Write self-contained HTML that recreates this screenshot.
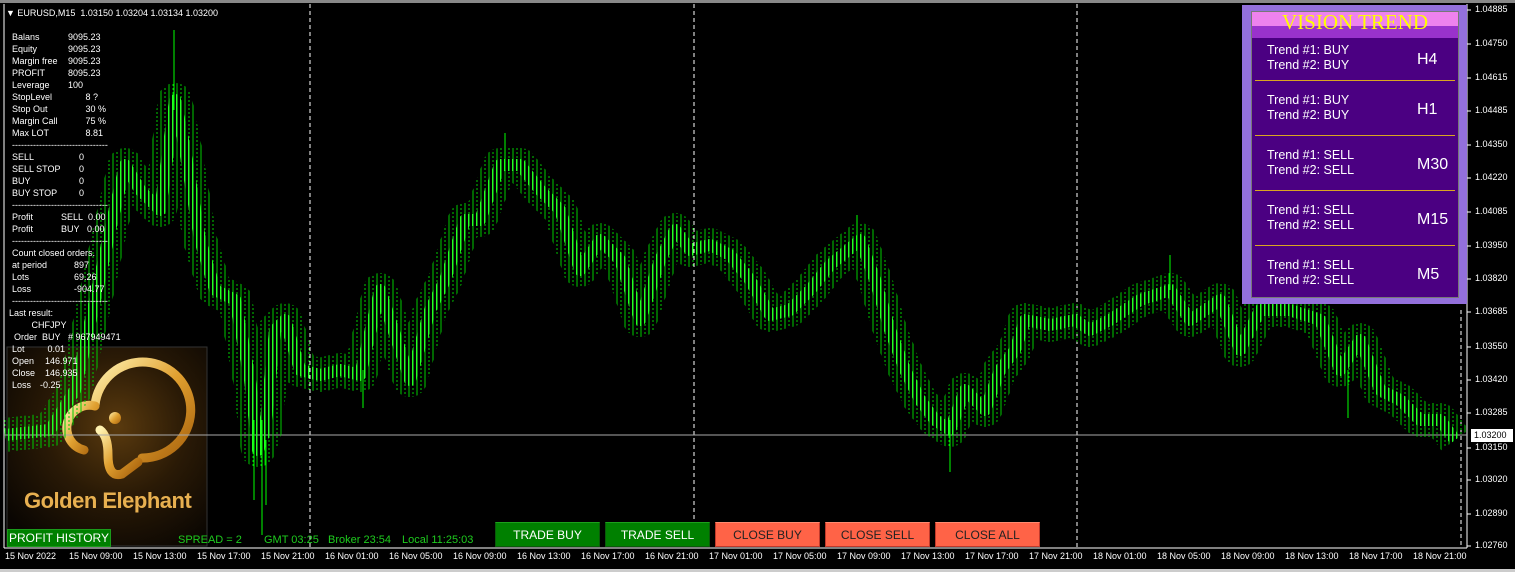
<!DOCTYPE html>
<html><head><meta charset="utf-8">
<style>
body{margin:0;width:1515px;height:572px;background:#000;overflow:hidden;position:relative;font-family:"Liberation Sans",sans-serif;}
.a{position:absolute;white-space:nowrap}
.info{color:#fff;font-size:9px;line-height:12px}
.px{position:absolute;color:#fff;font-size:9px;left:1475px}
.tm{position:absolute;color:#fff;font-size:9px;top:551px;white-space:nowrap}
.btn{position:absolute;top:522px;height:25px;width:105px;font-size:12px;text-align:center;line-height:24px;box-sizing:border-box}
.g{background:#008000;color:#fff;border:1px solid #0a5a0a;border-top-color:#1ca01c}
.r{background:#ff6347;color:#222;border:1px solid #c0392b;border-top-color:#ff8a70}
.tr{color:#fff;font-size:12.5px;line-height:15px;left:1267px}
.tf{color:#fff;font-size:16px;left:1417px}
.sep{position:absolute;left:1255px;width:200px;height:1px;background:#daa520}
.gt{color:#1ecc1e;font-size:11px;top:534px}
</style></head><body>
<div class="a" style="left:0;top:0;width:1515px;height:3px;background:#888"></div>
<div class="a" style="left:0;top:569px;width:1515px;height:3px;background:#ccc"></div>
<svg class="a" style="left:0;top:0" width="1515" height="572">
<defs>
<radialGradient id="lg" cx="0.55" cy="0.4" r="0.7"><stop offset="0" stop-color="#5a3a0e"/><stop offset="0.5" stop-color="#2a1a06"/><stop offset="1" stop-color="#0a0602"/></radialGradient>
<linearGradient id="gd" x1="0" y1="0" x2="1" y2="1"><stop offset="0" stop-color="#fff2b0"/><stop offset="0.5" stop-color="#e0a030"/><stop offset="1" stop-color="#a8620c"/></linearGradient>
<pattern id="pb" patternUnits="userSpaceOnUse" width="4" height="4"><rect x="0" y="0" width="1.5" height="4" fill="#22ff22"/></pattern>
<pattern id="pw" patternUnits="userSpaceOnUse" width="8" height="4"><rect x="0.5" y="0" width="1" height="4" fill="#00cc00"/><rect x="4.5" y="0" width="1" height="2" fill="#00cc00"/></pattern>
</defs>
<line x1="4" y1="4" x2="4" y2="548" stroke="#fff"/>
<line x1="1467" y1="4" x2="1467" y2="548" stroke="#fff"/>
<line x1="4" y1="548" x2="1467" y2="548" stroke="#fff"/>
<g stroke="#fff" stroke-dasharray="4,3">
<line x1="310" y1="4" x2="310" y2="547"/><line x1="694" y1="4" x2="694" y2="547"/><line x1="1077" y1="4" x2="1077" y2="547"/><line x1="1461" y1="310" x2="1461" y2="547"/>
</g>
<rect x="7" y="347" width="200" height="199" fill="url(#lg)" stroke="#333"/>
<g fill="none" stroke="url(#gd)" stroke-width="9" stroke-linecap="round">
<path d="M95 405 A48 48 0 1 1 142 458"/>
<path d="M95 406 A22 22 0 1 0 84 450"/>
<path d="M100 430 Q108 436 108 455 Q108 478 122 474 L138 462"/>
<path d="M108 448 L160 448"/>
</g>
<circle cx="115" cy="418" r="6" fill="url(#gd)"/>
<line x1="4" y1="435" x2="1467" y2="435" stroke="#aaa"/>
<g fill="none" stroke-linejoin="round">
<polyline stroke="url(#pw)" stroke-width="34" points="5,435 50,430 75,390 95,300 110,230 125,165 140,190 160,210 175,100 185,150 200,240 215,290 235,300 250,380 258,450 265,430 275,330 285,320 300,370 320,375 340,370 360,375 380,290 400,350 410,380 430,310 445,280 465,220 480,220 500,165 520,165 540,190 560,210 580,270 600,240 620,260 640,320 660,260 675,230 690,250 710,245 730,255 750,280 770,315 790,310 810,290 830,265 860,240 875,280 890,330 905,370 920,400 935,420 950,430 965,390 985,410 1000,370 1015,350 1025,320 1050,325 1075,320 1090,330 1110,320 1140,300 1170,290 1190,320 1220,300 1240,350 1260,310 1290,310 1320,320 1340,370 1360,340 1380,390 1400,400 1420,420 1440,420 1455,440"/>
<polyline stroke="url(#pb)" stroke-width="12" points="5,435 50,430 75,390 95,300 110,230 125,165 140,190 160,210 175,100 185,150 200,240 215,290 235,300 250,380 258,450 265,430 275,330 285,320 300,370 320,375 340,370 360,375 380,290 400,350 410,380 430,310 445,280 465,220 480,220 500,165 520,165 540,190 560,210 580,270 600,240 620,260 640,320 660,260 675,230 690,250 710,245 730,255 750,280 770,315 790,310 810,290 830,265 860,240 875,280 890,330 905,370 920,400 935,420 950,430 965,390 985,410 1000,370 1015,350 1025,320 1050,325 1075,320 1090,330 1110,320 1140,300 1170,290 1190,320 1220,300 1240,350 1260,310 1290,310 1320,320 1340,370 1360,340 1380,390 1400,400 1420,420 1440,420 1455,440"/>
</g>
<g stroke="#00ff00">
<line x1="174" y1="30" x2="174" y2="110"/><line x1="262" y1="420" x2="262" y2="535"/><line x1="254" y1="420" x2="254" y2="500"/><line x1="266" y1="440" x2="266" y2="505"/><line x1="505" y1="133" x2="505" y2="170"/><line x1="857" y1="215" x2="857" y2="250"/><line x1="950" y1="420" x2="950" y2="472"/><line x1="1170" y1="255" x2="1170" y2="290"/><line x1="1348" y1="370" x2="1348" y2="418"/><line x1="363" y1="370" x2="363" y2="408"/>
</g>
<g stroke="#fff">
<line x1="1467" y1="10" x2="1471" y2="10"/><line x1="1467" y1="44" x2="1471" y2="44"/><line x1="1467" y1="78" x2="1471" y2="78"/><line x1="1467" y1="111" x2="1471" y2="111"/><line x1="1467" y1="145" x2="1471" y2="145"/><line x1="1467" y1="178" x2="1471" y2="178"/><line x1="1467" y1="212" x2="1471" y2="212"/><line x1="1467" y1="246" x2="1471" y2="246"/><line x1="1467" y1="279" x2="1471" y2="279"/><line x1="1467" y1="312" x2="1471" y2="312"/><line x1="1467" y1="347" x2="1471" y2="347"/><line x1="1467" y1="380" x2="1471" y2="380"/><line x1="1467" y1="413" x2="1471" y2="413"/><line x1="1467" y1="448" x2="1471" y2="448"/><line x1="1467" y1="480" x2="1471" y2="480"/><line x1="1467" y1="514" x2="1471" y2="514"/><line x1="1467" y1="546" x2="1471" y2="546"/>
</g>
</svg>
<div class="a" style="left:6px;top:8px;color:#fff;font-size:9px">&#9660; EURUSD,M15 &nbsp;1.03150 1.03204 1.03134 1.03200</div>
<div class="a info" style="left:12px;top:31px">Balans<br>Equity<br>Margin free<br>PROFIT<br>Leverage<br>StopLevel<br>Stop Out<br>Margin Call<br>Max LOT<br>--------------------------------<br>SELL<br>SELL STOP<br>BUY<br>BUY STOP<br>--------------------------------<br>Profit<br>Profit<br>--------------------------------<br>Count closed orders.<br>at period<br>Lots<br>Loss<br>--------------------------------</div>
<div class="a info" style="left:68px;top:31px">9095.23<br>9095.23<br>9095.23<br>8095.23<br>100<br>&nbsp;&nbsp;&nbsp;&nbsp;&nbsp;&nbsp;&nbsp;8 ?<br>&nbsp;&nbsp;&nbsp;&nbsp;&nbsp;&nbsp;&nbsp;30 %<br>&nbsp;&nbsp;&nbsp;&nbsp;&nbsp;&nbsp;&nbsp;75 %<br>&nbsp;&nbsp;&nbsp;&nbsp;&nbsp;&nbsp;&nbsp;8.81</div>
<div class="a info" style="left:79px;top:151px">0<br>0<br>0<br>0</div>
<div class="a info" style="left:61px;top:211px">SELL&nbsp;&nbsp;0.00<br>BUY&nbsp;&nbsp;&nbsp;0.00</div>
<div class="a info" style="left:74px;top:259px">897<br>69.26<br>-904.77</div>
<div class="a info" style="left:9px;top:307px">Last result:<br>&nbsp;&nbsp;&nbsp;&nbsp;&nbsp;&nbsp;&nbsp;&nbsp;&nbsp;CHFJPY<br>&nbsp;&nbsp;Order&nbsp;&nbsp;BUY&nbsp;&nbsp;&nbsp;# 967949471</div>
<div class="a info" style="left:12px;top:343px">Lot<br>Open<br>Close<br>Loss</div>
<div class="a info" style="left:40px;top:343px">&nbsp;&nbsp;&nbsp;0.01<br>&nbsp;&nbsp;146.971<br>&nbsp;&nbsp;146.935<br>-0.25</div>
<div class="a" style="left:24px;top:488px;font-size:22px;font-weight:bold;color:#e8b050;letter-spacing:-0.5px">Golden Elephant</div>
<div class="a" style="left:7px;top:529px;width:104px;height:18px;background:#008000;border:1px solid #1a9a1a;box-sizing:border-box;color:#fff;font-size:12px;line-height:17px;text-align:center">PROFIT HISTORY</div>
<div class="a gt" style="left:178px">SPREAD = 2</div>
<div class="a gt" style="left:264px">GMT 03:25</div>
<div class="a gt" style="left:328px">Broker 23:54</div>
<div class="a gt" style="left:402px">Local 11:25:03</div>
<div class="btn g" style="left:495px">TRADE BUY</div>
<div class="btn g" style="left:605px">TRADE SELL</div>
<div class="btn r" style="left:715px">CLOSE BUY</div>
<div class="btn r" style="left:825px">CLOSE SELL</div>
<div class="btn r" style="left:935px">CLOSE ALL</div>
<div class="a" style="left:1242px;top:5px;width:225px;height:299px;background:#9370db"></div>
<div class="a" style="left:1251px;top:11px;width:208px;height:287px;background:#4b0082;border:1px solid #777;box-sizing:border-box"></div>
<div class="a" style="left:1252px;top:12px;width:206px;height:14px;background:#ee82ee"></div>
<div class="a" style="left:1252px;top:26px;width:206px;height:12px;background:#9932cc"></div>
<div class="a" style="left:1252px;top:10px;width:206px;text-align:center;font-family:'Liberation Serif',serif;font-size:21px;color:#ffff00">VISION TREND</div>
<div class="sep" style="top:80px"></div><div class="sep" style="top:135px"></div><div class="sep" style="top:190px"></div><div class="sep" style="top:245px"></div>
<div class="a tr" style="top:43px">Trend #1: BUY<br>Trend #2: BUY</div><div class="a tf" style="top:51px">H4</div>
<div class="a tr" style="top:93px">Trend #1: BUY<br>Trend #2: BUY</div><div class="a tf" style="top:101px">H1</div>
<div class="a tr" style="top:148px">Trend #1: SELL<br>Trend #2: SELL</div><div class="a tf" style="top:156px">M30</div>
<div class="a tr" style="top:203px">Trend #1: SELL<br>Trend #2: SELL</div><div class="a tf" style="top:211px">M15</div>
<div class="a tr" style="top:258px">Trend #1: SELL<br>Trend #2: SELL</div><div class="a tf" style="top:266px">M5</div>
<div class="px" style="top:4px">1.04885</div><div class="px" style="top:38px">1.04750</div><div class="px" style="top:72px">1.04615</div><div class="px" style="top:105px">1.04485</div><div class="px" style="top:139px">1.04350</div><div class="px" style="top:172px">1.04220</div><div class="px" style="top:206px">1.04085</div><div class="px" style="top:240px">1.03950</div><div class="px" style="top:273px">1.03820</div><div class="px" style="top:306px">1.03685</div><div class="px" style="top:341px">1.03550</div><div class="px" style="top:374px">1.03420</div><div class="px" style="top:407px">1.03285</div><div class="px" style="top:442px">1.03150</div><div class="px" style="top:474px">1.03020</div><div class="px" style="top:508px">1.02890</div><div class="px" style="top:540px">1.02760</div>
<div class="a" style="left:1471px;top:429px;width:42px;height:13px;background:#fff;color:#000;font-size:9px;line-height:13px;padding-left:3px;box-sizing:border-box">1.03200</div>
<div class="tm" style="left:5px">15 Nov 2022</div><div class="tm" style="left:69px">15 Nov 09:00</div><div class="tm" style="left:133px">15 Nov 13:00</div><div class="tm" style="left:197px">15 Nov 17:00</div><div class="tm" style="left:261px">15 Nov 21:00</div><div class="tm" style="left:325px">16 Nov 01:00</div><div class="tm" style="left:389px">16 Nov 05:00</div><div class="tm" style="left:453px">16 Nov 09:00</div><div class="tm" style="left:517px">16 Nov 13:00</div><div class="tm" style="left:581px">16 Nov 17:00</div><div class="tm" style="left:645px">16 Nov 21:00</div><div class="tm" style="left:709px">17 Nov 01:00</div><div class="tm" style="left:773px">17 Nov 05:00</div><div class="tm" style="left:837px">17 Nov 09:00</div><div class="tm" style="left:901px">17 Nov 13:00</div><div class="tm" style="left:965px">17 Nov 17:00</div><div class="tm" style="left:1029px">17 Nov 21:00</div><div class="tm" style="left:1093px">18 Nov 01:00</div><div class="tm" style="left:1157px">18 Nov 05:00</div><div class="tm" style="left:1221px">18 Nov 09:00</div><div class="tm" style="left:1285px">18 Nov 13:00</div><div class="tm" style="left:1349px">18 Nov 17:00</div><div class="tm" style="left:1413px">18 Nov 21:00</div>
</body></html>
